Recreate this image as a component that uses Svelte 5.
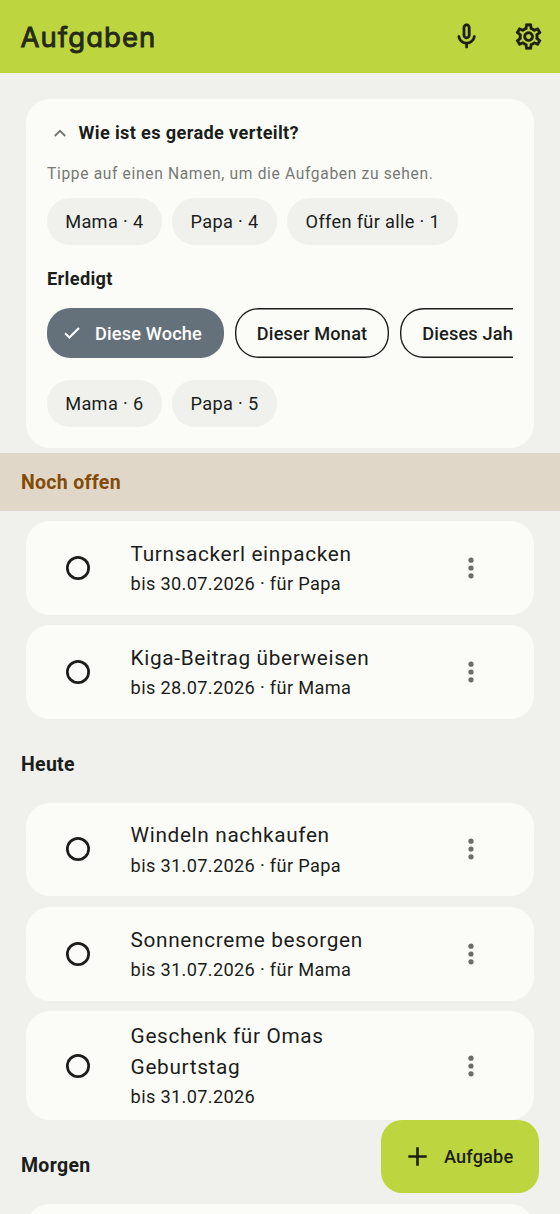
<script>
  const open = ['Mama · 4', 'Papa · 4', 'Offen für alle · 1'];
  const done = ['Mama · 6', 'Papa · 5'];
  const sections = [
    {
      title: 'Noch offen',
      overdue: true,
      tasks: [
        { title: 'Turnsackerl einpacken', info: 'bis 30.07.2026 · für Papa' },
        { title: 'Kiga-Beitrag überweisen', info: 'bis 28.07.2026 · für Mama' }
      ]
    },
    {
      title: 'Heute',
      tasks: [
        { title: 'Windeln nachkaufen', info: 'bis 31.07.2026 · für Papa' },
        { title: 'Sonnencreme besorgen', info: 'bis 31.07.2026 · für Mama' },
        { title: 'Geschenk für Omas Geburtstag', info: 'bis 31.07.2026', tall: true }
      ]
    },
    { title: 'Morgen', tasks: [{ title: '', info: '' }] }
  ];
</script>

<div class="screen">
  <header>
    <h1>Aufgaben</h1>
    <svg class="mic" viewBox="0 0 24 24" width="31.2" height="31.2" fill="#1d1f14" stroke="#1d1f14" stroke-width=".15">
      <path d="M12 14c1.66 0 3-1.34 3-3V5c0-1.66-1.34-3-3-3S9 3.340 9 5v6c0 1.660 1.340 3 3 3zm-1-9c0-.55.45-1 1-1s1 .45 1 1v6c0 .55-.45 1-1 1s-1-.45-1-1V5zm6.920 6c-.49 0-.9.36-.98.850C16.520 14.200 14.470 16 12 16s-4.520-1.800-4.930-4.150c-.08-.49-.49-.85-.98-.85-.61 0-1.090.54-1 1.140.49 3 2.890 5.350 5.910 5.780V20c0 .55.45 1 1 1s1-.45 1-1v-2.080c3.020-.43 5.420-2.780 5.910-5.780.1-.6-.39-1.140-.99-1.140z" />
    </svg>
    <svg class="gear" viewBox="0 0 24 24" width="31.2" height="31.2" fill="#1d1f14" stroke="#1d1f14" stroke-width=".2">
      <path d="M19.430 12.980c.04-.32.07-.64.07-.98s-.03-.66-.07-.98l2.110-1.650c.19-.15.24-.42.12-.64l-2-3.460c-.09-.16-.26-.25-.44-.25-.06 0-.12.010-.17.030l-2.490 1c-.52-.4-1.080-.73-1.690-.98l-.38-2.650C14.460 2.180 14.250 2 14 2h-4c-.25 0-.46.18-.49.42l-.38 2.650c-.61.25-1.170.59-1.690.98l-2.490-1c-.06-.02-.12-.03-.18-.03-.17 0-.34.09-.43.25l-2 3.460c-.13.22-.07.49.12.64l2.110 1.650c-.04.32-.07.65-.07.98s.03.66.07.98l-2.110 1.650c-.19.15-.24.42-.12.64l2 3.460c.09.16.26.25.44.25.06 0 .12-.01.17-.03l2.490-1c.52.4 1.080.73 1.690.98l.38 2.650c.03.24.24.42.49.42h4c.25 0 .46-.18.49-.42l.38-2.650c.61-.25 1.170-.59 1.690-.98l2.490 1c.06.02.12.03.18.03.17 0 .34-.09.43-.25l2-3.460c.12-.22.07-.49-.12-.64l-2.110-1.650zm-1.980-1.710c.04.31.05.52.05.73s-.02.43-.05.73l-.14 1.130.89.7 1.080.84-.7 1.210-1.270-.51-1.040-.42-.9.68c-.43.32-.84.56-1.250.73l-1.060.43-.16 1.130-.2 1.350h-1.400l-.19-1.350-.16-1.130-1.060-.43c-.43-.18-.83-.41-1.230-.71l-.91-.7-1.060.43-1.270.51-.7-1.210 1.080-.84.89-.7-.14-1.130c-.03-.31-.05-.54-.05-.74s.02-.43.05-.73l.14-1.130-.89-.7-1.080-.84.7-1.210 1.270.51 1.040.42.9-.68c.43-.32.84-.56 1.250-.73l1.060-.43.16-1.130.2-1.350h1.390l.19 1.350.16 1.130 1.060.43c.43.18.83.41 1.230.71l.91.7 1.060-.43 1.270-.51.7 1.210-1.070.85-.89.7.14 1.130zM12 8c-2.210 0-4 1.790-4 4s1.790 4 4 4 4-1.790 4-4-1.790-4-4-4zm0 6c-1.100 0-2-.9-2-2s.9-2 2-2 2 .9 2 2-.9 2-2 2z" />
    </svg>
  </header>

  <section class="summary">
    <div class="question">
      <svg viewBox="0 0 12 8" width="12" height="8" fill="none" stroke="#73756f" stroke-width="1.9"><path d="M.8 7 6 1.800 11.200 7" /></svg>
      <h2>Wie ist es gerade verteilt?</h2>
    </div>
    <p>Tippe auf einen Namen, um die Aufgaben zu sehen.</p>
    <div class="chips">
      {#each open as label}<span class="chip">{label}</span>{/each}
    </div>
    <h2 class="done">Erledigt</h2>
    <div class="periods">
      <span class="period selected">
        <svg viewBox="0 0 16 12" width="16" height="12" fill="none" stroke="#fff" stroke-width="2.1"><path d="M1 6.200 5.300 10.500 15 1" /></svg>
        Diese Woche
      </span>
      <span class="period">Dieser Monat</span>
      <span class="period">Dieses Jahr</span>
    </div>
    <div class="chips">
      {#each done as label}<span class="chip">{label}</span>{/each}
    </div>
  </section>

  {#each sections as section}
    <h2 class="heading" class:overdue={section.overdue}>{section.title}</h2>
    <div class="tasks">
      {#each section.tasks as task}
        <article class:tall={task.tall}>
          <span class="check"></span>
          <div class="text">
            <h3>{task.title}</h3>
            <div class="info">{task.info}</div>
          </div>
          <svg viewBox="0 0 6 22" width="6" height="22" fill="#6b6d69">
            <circle cx="3" cy="3.200" r="2.600" /><circle cx="3" cy="11" r="2.600" /><circle cx="3" cy="18.800" r="2.600" />
          </svg>
        </article>
      {/each}
    </div>
  {/each}

  <button>
    <svg viewBox="0 0 19 19" width="19" height="19" fill="none" stroke="#1d1f14" stroke-width="2.600"><path d="M9.500 .3v18.400M.3 9.500h18.400" /></svg>
    Aufgabe
  </button>
</div>

<style>
  .screen {
    position: relative;
    height: 1214px;
    overflow: hidden;
    background: #f0f1ed;
    color: #1b1d1b;
    font-family: Roboto, sans-serif;
  }
  h1, h2, h3, p { margin: 0; }
  svg { display: block; flex: none; }
  header {
    box-sizing: border-box;
    height: 72.700px;
    padding: 0 15.500px 0 20.500px;
    display: flex;
    align-items: center;
    background: #bdd63f;
  }
  h1 {
    flex: 1;
    padding-top: 1px;
    font: 400 27.500px/36px Inter, sans-serif;
    font-feature-settings: 'cv11';
    letter-spacing: 1.050px;
    -webkit-text-stroke: .9px #26281a;
    color: #26281a;
  }
  .gear { margin-left: 31.500px; }
  .summary {
    box-sizing: border-box;
    height: 349.500px;
    margin: 26.100px 26.500px 0 26px;
    padding: 21.500px 21px;
    border-radius: 24px;
    background: #fbfcf7;
  }
  h2 {
    font-size: 18.200px;
    line-height: 26px;
    font-weight: 700;
    letter-spacing: .34px;
  }
  .question { display: flex; align-items: center; gap: 12.500px; padding-left: 7px; }
  p {
    margin-top: 17.500px;
    font-size: 15.600px;
    line-height: 21px;
    letter-spacing: .65px;
    color: #777975;
  }
  .chips { display: flex; gap: 10.700px; margin-top: 13px; }
  .chip {
    display: flex;
    align-items: center;
    height: 47px;
    padding: 0 18.200px;
    border-radius: 23px;
    background: #f0f1ed;
    font-size: 18.200px;
    letter-spacing: .33px;
    white-space: nowrap;
  }
  .done { margin-top: 21px; }
  .periods { display: flex; gap: 10.600px; overflow: hidden; margin-top: 16.700px; }
  .period {
    box-sizing: border-box;
    height: 49.500px;
    display: flex;
    flex: none;
    align-items: center;
    box-shadow: inset 0 0 0 1.400px #1b1d1b;
    border-radius: 23.500px;
    padding: 0 22.100px;
    font-size: 18.200px;
    font-weight: 500;
    letter-spacing: .17px;
  }
  .selected { gap: 15.200px; padding-left: 16.700px; background: #65717a; box-shadow: none; color: #fff; }
  .periods + .chips { margin-top: 22px; }
  .heading {
    height: 57.500px;
    box-sizing: border-box;
    padding-left: 21px;
    padding-top: 1px;
    font-size: 19.500px;
    line-height: 57.500px;
    letter-spacing: .3px;
  }
  .overdue { margin-top: 5px; background: #e1d7c8; color: #824c08; }
  .tasks {
    display: flex;
    flex-direction: column;
    gap: 10.450px;
    padding: 10.300px 26.500px 15.700px 26px;
  }
  article {
    box-sizing: border-box;
    height: 93.800px;
    flex: none;
    display: flex;
    align-items: center;
    padding: 0 59.500px 0 40px;
    border-radius: 24px;
    background: #fbfcf7;
  }
  .tall { height: 109px; }
  .check { width: 24px; height: 24px; box-shadow: inset 0 0 0 2.700px #1b1d1b; border-radius: 50%; }
  .text { flex: 1; margin: 0 40px 0 40.600px; }
  h3 { font-size: 20.800px; line-height: 31.200px; font-weight: 400; letter-spacing: .65px; }
  .info { font-size: 18.200px; line-height: 27px; letter-spacing: .33px; }
  button {
    position: absolute;
    right: 21px;
    bottom: 21px;
    width: 158px;
    height: 73px;
    display: flex;
    align-items: center;
    gap: 17px;
    padding: 0 0 0 27px;
    border: 0;
    border-radius: 21px;
    background: #bdd63f;
    color: #1d1f14;
    font: 500 18.200px Roboto, sans-serif;
    letter-spacing: .13px;
  }
</style>
